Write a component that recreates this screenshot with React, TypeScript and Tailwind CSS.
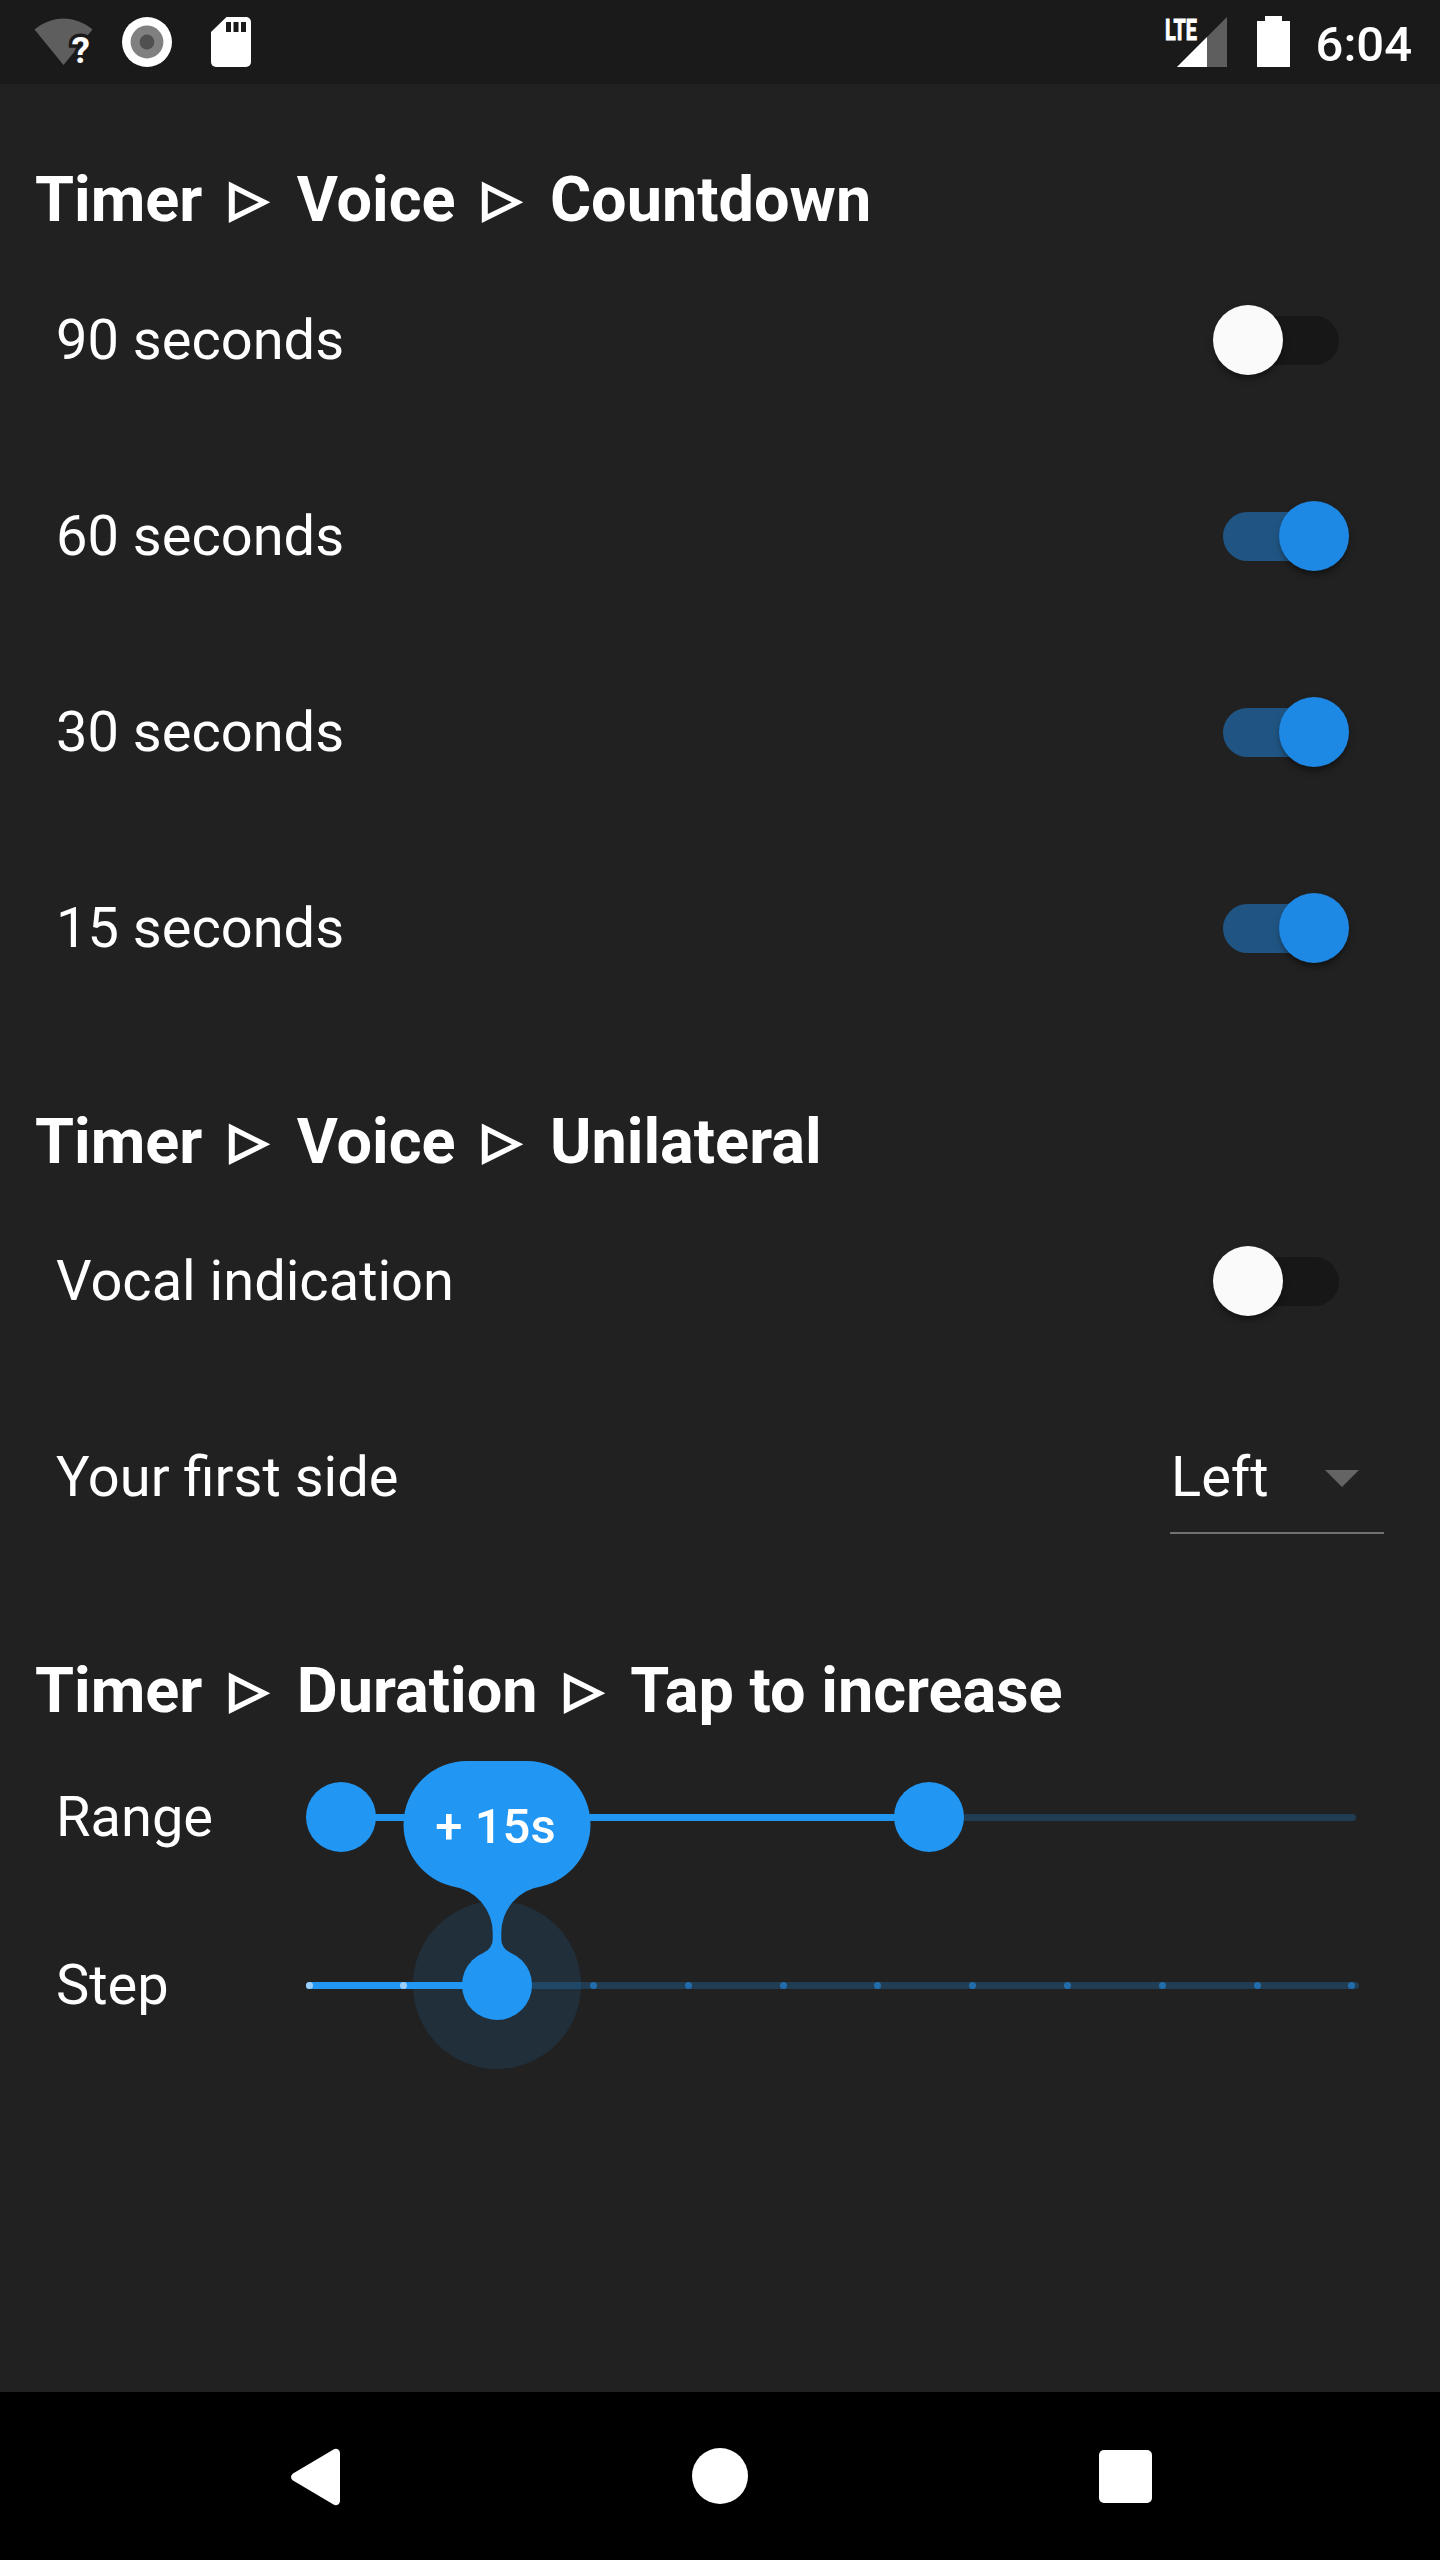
import React from "react";

function WifiUnknownIcon() {
  return (
    <svg className="-mb-[10px] h-[60px] w-[64px] overflow-visible" viewBox="0 0 64 60">
      <path d="M0.5 12.5 C9 5.5 19 1.5 29.5 1.5 C40 1.5 50 5.5 58.5 12.5 L29.5 48 Z" fill="#5e5e5e" />
      <text
        x="46.800"
        y="46"
        textAnchor="middle"
        fontSize="37"
        className="fill-white stroke-[#1a1a1a] stroke-[7px] font-[Roboto] font-bold [paint-order:stroke]"
      >
        ?
      </text>
    </svg>
  );
}

function RecordIcon() {
  return (
    <svg className="size-[50px]" viewBox="0 0 50 50">
      <circle cx="25" cy="25" r="25" fill="#fff" />
      <circle cx="25" cy="25" r="16.4" fill="#808080" />
      <circle cx="25" cy="25" r="7.4" fill="#505050" />
    </svg>
  );
}

function SdCardIcon() {
  return (
    <svg className="h-[50px] w-10" viewBox="0 0 40 50">
      <path d="M15.5 0H35a5 5 0 0 1 5 5V45a5 5 0 0 1-5 5H5a5 5 0 0 1-5-5V15Z" fill="#fff" />
      <path d="M15 5h5v10h-5zM22.5 5h5v10h-5zM30 5h5v10h-5z" fill="#1a1a1a" />
    </svg>
  );
}

function LteSignalIcon() {
  return (
    <svg className="-mt-2 h-[58px] w-[62px] overflow-visible" viewBox="0 -8 62 58">
      <path d="M62 0V50H12Z" fill="#5e5e5e" />
      <path d="M42 20V50H12Z" fill="#fff" />
      <text
        x="0"
        y="22.5"
        fontSize="30"
        textLength="32"
        lengthAdjust="spacingAndGlyphs"
        className="fill-white stroke-white stroke-[1px] font-[Roboto] font-bold"
      >
        LTE
      </text>
    </svg>
  );
}

function BatteryIcon() {
  return (
    <svg className="h-[51px] w-[33px]" viewBox="0 0 33 51">
      <path d="M8 0H25V5H33V51H0V5H8Z" fill="#fff" />
    </svg>
  );
}

function StatusBar() {
  return (
    <header className="flex h-[84px] items-center justify-between bg-[#1a1a1a] pl-[34px] pr-7">
      <div className="flex items-center">
        <WifiUnknownIcon />
        <div className="ml-6">
          <RecordIcon />
        </div>
        <div className="ml-[39px]">
          <SdCardIcon />
        </div>
      </div>
      <div className="flex items-center">
        <LteSignalIcon />
        <div className="mb-px ml-[30px]">
          <BatteryIcon />
        </div>
        <span className="ml-[26px] mt-1 text-[49px] font-medium leading-none">6:04</span>
      </div>
    </header>
  );
}

function Separator() {
  return (
    <svg className="mb-[-2px] inline-block h-[42px] w-[63px] align-baseline" viewBox="0 0 63 42">
      <path fillRule="evenodd" d="M10.800 0.6L52.300 21.300L10.800 42ZM16.800 9.600V33L40.800 21.300Z" fill="#fff" />
    </svg>
  );
}

function Heading({ path }: { path: string[] }) {
  return (
    <h2 className="whitespace-nowrap pb-px pl-[35px] pt-[76px] text-[63px] font-bold leading-[80px]">
      {path.map((part, i) => (
        <React.Fragment key={part}>
          {i > 0 && (
            <>
              {" "}
              <Separator />{" "}
            </>
          )}
          {part}
        </React.Fragment>
      ))}
    </h2>
  );
}

function Row({ label, children }: { label: string; children: React.ReactNode }) {
  return (
    <div className="flex h-[196px] items-center justify-between px-14">
      <span>{label}</span>
      {children}
    </div>
  );
}

const thumbShadow =
  "shadow-[0_7px_4px_-4px_rgba(0,0,0,0.2),0_4px_4px_rgba(0,0,0,0.14),0_4px_10px_rgba(0,0,0,0.12)]";

function Switch({ on }: { on: boolean }) {
  return (
    <div
      className={`relative mr-[45.5px] h-[49px] w-[115.5px] rounded-full ${on ? "bg-[#205583]" : "bg-[#171717]"}`}
    >
      <div
        className={`absolute top-[-10.5px] size-[70px] rounded-full ${thumbShadow} ${
          on ? "right-[-10.5px] bg-[#1e88e5]" : "left-[-10.5px] bg-[#fafafa]"
        }`}
      />
    </div>
  );
}

function Select({ value }: { value: string }) {
  return (
    <div className="mt-[2px] flex h-[112px] w-[214px] items-center justify-between border-b-2 border-[#727272] pl-px pr-[25px]">
      <span>{value}</span>
      <svg className="mt-[3px] h-[17px] w-[34px]" viewBox="0 0 34 17">
        <path d="M0 0H34L17 17Z" fill="#646464" />
      </svg>
    </div>
  );
}

function SliderThumb({ className }: { className: string }) {
  return <div className={`absolute top-[-31.5px] size-[70px] rounded-full bg-[#2196f3] ${className}`} />;
}

function ValueBubble({ text }: { text: string }) {
  return (
    <div className="absolute left-[96.5px] top-[-220.5px] w-[188px]">
      <svg className="block h-[230px] w-full" viewBox="0 0 188 230">
        <path
          d="M64 0H124A63.500 63.500 0 0 1 187.500 63.500A63.500 63.500 0 0 1 139 125.200A47 47 0 0 0 98.300 173V178A14 14 0 0 0 107 191.500L94 226L81 191.500A14 14 0 0 0 89.700 178V173A47 47 0 0 0 49 125.200A63.500 63.500 0 0 1 0.500 63.500A63.500 63.500 0 0 1 64 0Z"
          fill="#2196f3"
        />
      </svg>
      <span className="absolute inset-x-0 top-[37px] pr-[2px] text-center text-[49px] font-medium leading-[58px]">
        {text}
      </span>
    </div>
  );
}

function RangeSlider() {
  return (
    <div className="relative h-[7px] w-[1050px] rounded-full bg-[#213d53]">
      <div className="absolute left-[35px] h-[7px] w-[588px] bg-[#2196f3]" />
      <SliderThumb className="left-0" />
      <SliderThumb className="left-[587.5px]" />
    </div>
  );
}

function StepSlider() {
  const ticks = Array.from({ length: 12 }, (_, i) => i);
  return (
    <div className="relative h-[7px] w-[1053px] rounded-full bg-[#213d53]">
      <div className="absolute left-[106.5px] top-[-80.5px] size-[168px] rounded-full bg-[#2196f3]/12" />
      <div className="absolute left-0 h-[7px] w-[190px] rounded-l-full bg-[#2196f3]" />
      <div className="absolute inset-y-0 left-[-0.5px] flex w-[1050px] justify-between">
        {ticks.map((i) => (
          <span key={i} className={`size-[7px] rounded-full ${i < 2 ? "bg-[#9bcffa]" : "bg-[#216dab]"}`} />
        ))}
      </div>
      <SliderThumb className="left-[155.5px]" />
      <ValueBubble text="+ 15s" />
    </div>
  );
}

function SliderRow({ label, children }: { label: string; children: React.ReactNode }) {
  return (
    <div className="flex h-[168px] items-center pl-14">
      <span className="w-[250px]">{label}</span>
      {children}
    </div>
  );
}

function NavBar() {
  return (
    <nav className="flex h-[168px] items-center justify-between bg-black pl-[291px] pr-[288px]">
      <svg className="mt-[2px] h-[58px] w-[49px]" viewBox="0 0 49 58">
        <path
          d="M2 25.500L42.500 1.500Q45 0 47.200 1.500Q49 2.800 49 5V53Q49 55.200 47.200 56.500Q45 58 42.500 56.500L2 32.500Q0 31 0 29Q0 27 2 25.500Z"
          fill="#fff"
        />
      </svg>
      <div className="size-14 rounded-full bg-white" />
      <div className="mt-px size-[53px] rounded-[5px] bg-white" />
    </nav>
  );
}

export default function App() {
  return (
    <div className="flex h-[2560px] w-[1440px] flex-col bg-[#212121] font-[Roboto,sans-serif] text-[56px] leading-[66px] text-white">
      <StatusBar />
      <main className="flex-1">
        <div className="pb-px">
          <Heading path={["Timer", "Voice", "Countdown"]} />
        </div>
        <Row label="90 seconds">
          <Switch on={false} />
        </Row>
        <Row label="60 seconds">
          <Switch on />
        </Row>
        <Row label="30 seconds">
          <Switch on />
        </Row>
        <Row label="15 seconds">
          <Switch on />
        </Row>
        <Heading path={["Timer", "Voice", "Unilateral"]} />
        <Row label="Vocal indication">
          <Switch on={false} />
        </Row>
        <Row label="Your first side">
          <Select value="Left" />
        </Row>
        <div className="pb-px">
          <Heading path={["Timer", "Duration", "Tap to increase"]} />
        </div>
        <SliderRow label="Range">
          <RangeSlider />
        </SliderRow>
        <SliderRow label="Step">
          <StepSlider />
        </SliderRow>
      </main>
      <NavBar />
    </div>
  );
}
